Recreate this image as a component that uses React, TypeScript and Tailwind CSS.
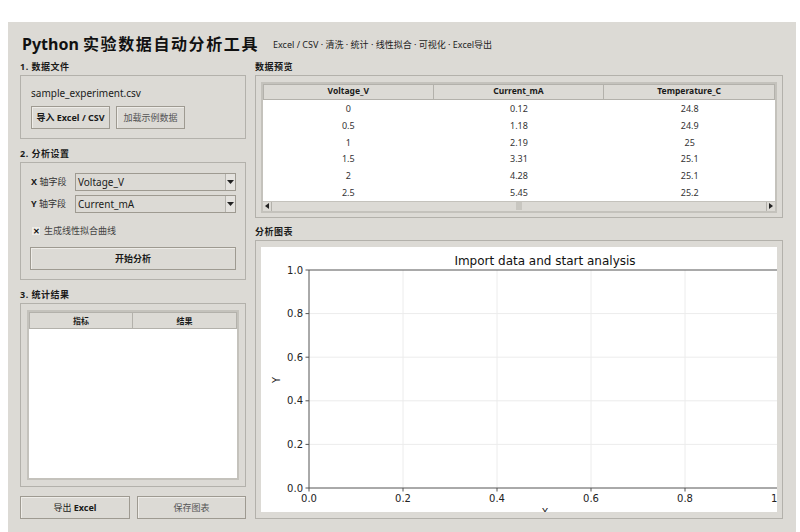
import React from "react";

const F = { fontFamily: '"Noto Sans", "Noto Sans CJK SC", sans-serif' };

function Combo({ value }: { value: string }) {
  return (
    <div className="flex h-[18px] flex-1 border border-[#9e9a91] bg-[#dcdad5]">
      <div className="flex flex-1 items-center pl-[2px] text-[10px] text-[#1a1a1a]">{value}</div>
      <div className="flex w-[10px] items-center justify-center border-l border-[#b5b3ad] bg-[#e4e2de]">
        <svg width="7" height="4" viewBox="0 0 7 4"><path d="M0 0 L7 0 L3.5 4 Z" fill="#222" /></svg>
      </div>
    </div>
  );
}

function Btn({ children, w, bold, h = "h-[23px]" }: { children: React.ReactNode; w: string; bold?: boolean; h?: string }) {
  return (
    <div
      className={`${w} ${h} flex items-center justify-center border border-[#9e9a91] bg-[#dcdad5] shadow-[inset_1px_1px_0_#eeece8] text-[9px] ${
        bold ? "font-bold text-[#1a1a1a]" : "text-[#555]"
      }`}
    >
      {children}
    </div>
  );
}

function Label({ children, h }: { children: React.ReactNode; h: string }) {
  return (
    <div className={`${h} flex items-end pb-[2px] text-[9px] font-bold text-[#1a1a1a] tracking-[0.5px]`}>{children}</div>
  );
}

function Plot() {
  const L = 48, T = 23, B = 241, R = 518;
  const xs = [0, 0.2, 0.4, 0.6, 0.8, 1];
  const xp = (v: number) => L + v * (R - L);
  const yp = (v: number) => B - v * (B - T);
  const tf = { fontFamily: '"DejaVu Sans", sans-serif' };
  return (
    <svg width="516" height="265" viewBox="0 0 516 265" className="block">
      <rect x="0" y="0" width="516" height="265" fill="#fff" />
      {[0.2, 0.4, 0.6, 0.8].map((v) => (
        <g key={v}>
          <line x1={xp(v)} y1={T} x2={xp(v)} y2={B} stroke="#ececec" strokeWidth="1" />
          <line x1={L} y1={yp(v)} x2={R} y2={yp(v)} stroke="#ececec" strokeWidth="1" />
        </g>
      ))}
      <line x1={L} y1={T} x2={R} y2={T} stroke="#555" strokeWidth="1" />
      <line x1={L} y1={B} x2={R} y2={B} stroke="#555" strokeWidth="1" />
      <line x1={L} y1={T} x2={L} y2={B} stroke="#555" strokeWidth="1" />
      {xs.map((v) => (
        <g key={"t" + v}>
          <line x1={xp(v)} y1={B} x2={xp(v)} y2={B + 3.5} stroke="#555" />
          <line x1={L - 3.5} y1={yp(v)} x2={L} y2={yp(v)} stroke="#555" />
          <text x={xp(v)} y={255} fontSize="10" textAnchor="middle" fill="#222" style={tf}>
            {v === 1 ? "1.0" : v.toFixed(1)}
          </text>
          <text x={L - 6} y={yp(v) + 3.6} fontSize="10" textAnchor="end" fill="#222" style={tf}>
            {v.toFixed(1)}
          </text>
        </g>
      ))}
      <text x={284} y={18} fontSize="12" textAnchor="middle" fill="#111" style={tf}>
        Import data and start analysis
      </text>
      <text x={0} y={0} fontSize="10" textAnchor="middle" fill="#222" style={tf} transform="translate(19 133) rotate(-90)">
        Y
      </text>
      <text x={284} y={269} fontSize="10" textAnchor="middle" fill="#222" style={tf}>
        X
      </text>
    </svg>
  );
}

export default function App() {
  const rows = [
    ["0", "0.12", "24.8"],
    ["0.5", "1.18", "24.9"],
    ["1", "2.19", "25"],
    ["1.5", "3.31", "25.1"],
    ["2", "4.28", "25.1"],
    ["2.5", "5.45", "25.2"],
  ];
  return (
    <div className="h-[532px] w-[800px] overflow-hidden bg-white pl-[8px] pt-[22px]" style={F}>
      <div className="h-[510px] w-[788px] bg-[#dcdad5] pl-[12px] pr-[13px] text-[#1a1a1a]">
        {/* header */}
        <div className="flex h-[38px] items-center pl-[2px] pt-[6px]">
          <div className="text-[16px] font-bold leading-none text-[#111]">
            Python <span className="text-[16px] tracking-[1.6px]">实验数据自动分析工具</span>
          </div>
          <div className="ml-[14px] pt-[2px] text-[9px] text-[#222]">
            Excel / CSV · 清洗 · 统计 · 线性拟合 · 可视化 · Excel导出
          </div>
        </div>

        <div className="flex gap-[9px]">
          {/* left column */}
          <div className="flex w-[226px] flex-col">
            <Label h="h-[15px]">1. 数据文件</Label>
            <div className="h-[64px] border border-[#b3b1ab] px-[10px] pt-[9px]">
              <div className="text-[10px] leading-[16px] text-[#1a1a1a]">sample_experiment.csv</div>
              <div className="mt-[5px] flex gap-[6px]">
                <Btn w="w-[79px]" bold>
                  导入 Excel / CSV
                </Btn>
                <Btn w="w-[69px]">加载示例数据</Btn>
              </div>
            </div>

            <Label h="h-[23px]">2. 分析设置</Label>
            <div className="h-[118px] border border-[#b3b1ab] px-[9px] pt-[10px]">
              <div className="flex items-center">
                <div className="w-[45px] pl-[1px] text-[9px] font-bold">X <span className="font-normal text-[#333]">轴字段</span></div>
                <Combo value="Voltage_V" />
              </div>
              <div className="mt-[4px] flex items-center">
                <div className="w-[45px] pl-[1px] text-[9px] font-bold">Y <span className="font-normal text-[#333]">轴字段</span></div>
                <Combo value="Current_mA" />
              </div>
              <div className="mt-[12px] flex h-[12px] items-center gap-[4px] pl-[2px] text-[9px] text-[#444]">
                <div className="flex h-[8px] w-[8px] items-center justify-center bg-[#eeece8] text-[8px] font-bold leading-none text-[#111]">✕</div>
                生成线性拟合曲线
              </div>
              <div className="mt-[10px]">
                <Btn w="w-full" h="h-[23px]" bold>
                  开始分析
                </Btn>
              </div>
            </div>

            <Label h="h-[23px]">3. 统计结果</Label>
            <div className="h-[184px] border border-[#b3b1ab] p-[6px]">
              <div className="flex h-full flex-col border-2 border-[#c4c2bc] bg-white">
                <div className="grid h-[17px] grid-cols-[104px_1fr] bg-[#dcdad5] text-[8px] font-bold">
                  <div className="flex items-center justify-center border border-[#b3b1ab]">指标</div>
                  <div className="flex items-center justify-center border border-l-0 border-[#b3b1ab]">结果</div>
                </div>
                <div className="flex-1 bg-white" />
              </div>
            </div>

            <div className="mt-[9px] flex gap-[7px]">
              <Btn w="w-[110px]" bold>
                <span className="font-normal">导出</span>&nbsp;Excel
              </Btn>
              <Btn w="w-[109px]">保存图表</Btn>
            </div>
          </div>

          {/* right column */}
          <div className="flex w-[528px] flex-col">
            <Label h="h-[15px]">数据预览</Label>
            <div className="h-[143px] border border-[#b3b1ab] px-[5px] pt-[6px]">
              <div className="flex h-[131px] flex-col border-2 border-[#c4c2bc] bg-white">
                <div className="grid h-[17px] grid-cols-3 bg-[#dcdad5] text-[8.5px] font-bold">
                  <div className="flex items-center justify-center border border-[#b3b1ab]">Voltage_V</div>
                  <div className="flex items-center justify-center border border-l-0 border-[#b3b1ab]">Current_mA</div>
                  <div className="flex items-center justify-center border border-l-0 border-[#b3b1ab]">Temperature_C</div>
                </div>
                <div className="flex-1 pt-[1px]">
                  {rows.map((r, i) => (
                    <div key={i} className="grid h-[16.7px] grid-cols-3 text-[9px] text-[#333]">
                      {r.map((c, j) => (
                        <div key={j} className="flex items-center justify-center">
                          {c}
                        </div>
                      ))}
                    </div>
                  ))}
                </div>
                <div className="flex h-[11px] items-center border-t border-[#c4c2bc] bg-[#dcdad5]">
                  <div className="flex h-full w-[9px] items-center justify-center border-r border-[#b3b1ab]">
                    <svg width="4" height="6" viewBox="0 0 4 6"><path d="M4 0 L0 3 L4 6 Z" fill="#222" /></svg>
                  </div>
                  <div className="relative flex-1">
                    <div className="absolute left-[244px] top-[-4px] h-[8px] w-[6px] bg-[#c8c6c0]" />
                  </div>
                  <div className="flex h-full w-[9px] items-center justify-center border-l border-[#b3b1ab]">
                    <svg width="4" height="6" viewBox="0 0 4 6"><path d="M0 0 L4 3 L0 6 Z" fill="#222" /></svg>
                  </div>
                </div>
              </div>
            </div>

            <Label h="h-[22px]">分析图表</Label>
            <div className="h-[279px] border border-[#b3b1ab] px-[5px] pt-[6px]">
              <div className="h-[265px] w-[516px] overflow-hidden">
                <Plot />
              </div>
            </div>
          </div>
        </div>
      </div>
    </div>
  );
}
